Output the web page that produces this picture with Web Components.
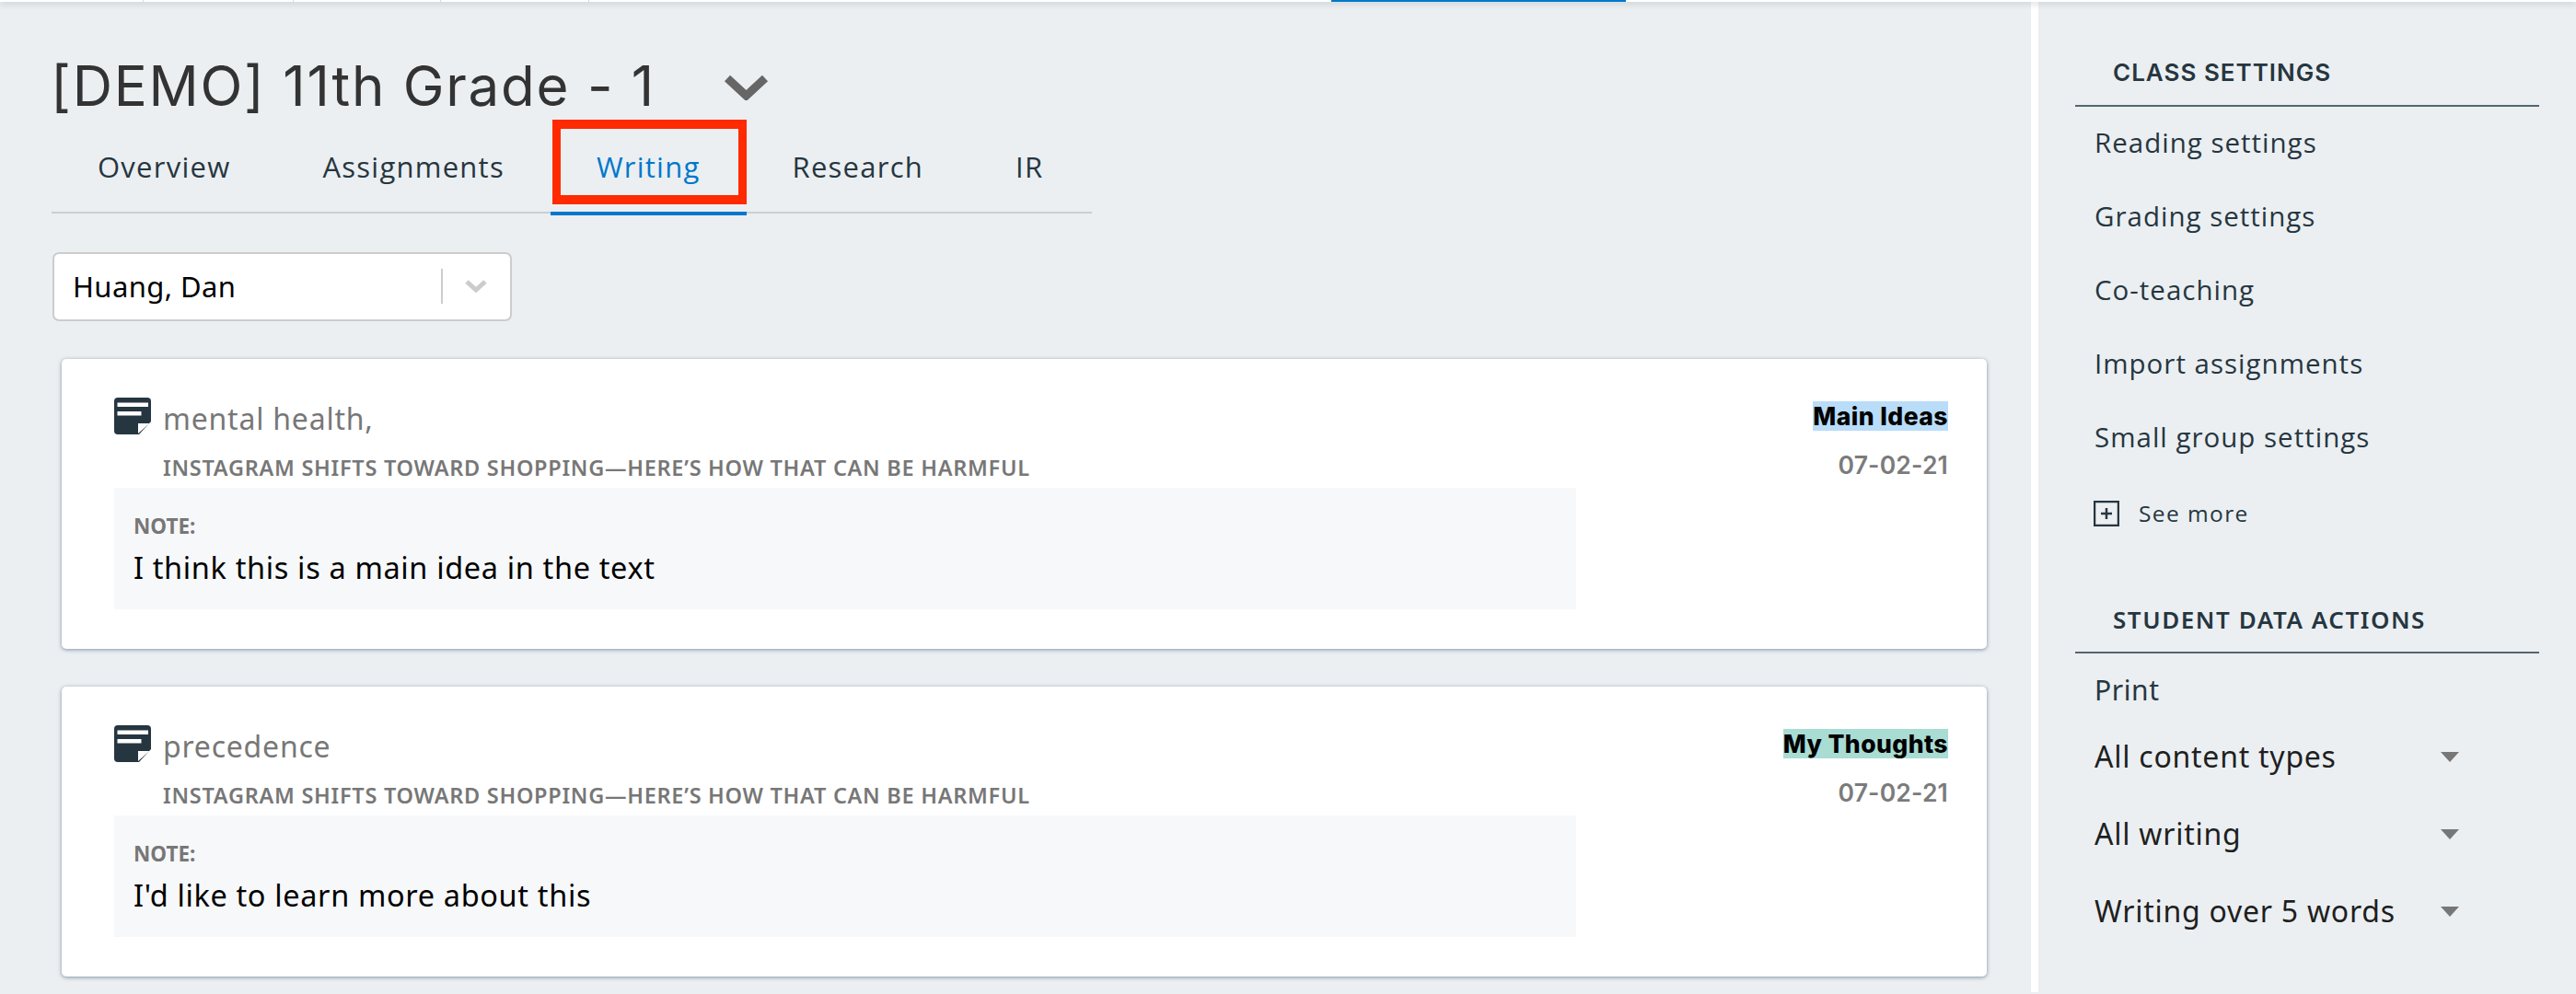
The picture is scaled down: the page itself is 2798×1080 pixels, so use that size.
<!DOCTYPE html>
<html lang="en">
<head>
<meta charset="utf-8">
<title>Writing</title>
<style>
  html, body { margin: 0; height: 100%; background: #ebeff2; overflow: hidden; }
  body { font-family: "Open Sans", sans-serif; }
  .page { display: flex; flex-direction: column; height: 1080px; }
  .columns { display: flex; flex: 1; min-height: 0; }
</style>
</head>
<body>
<div class="page">
  <top-strip></top-strip>
  <div class="columns">
    <main-column>
      <class-title>[DEMO] 11th Grade - 1</class-title>
      <tab-bar>
        <tab-item>Overview</tab-item>
        <tab-item>Assignments</tab-item>
        <tab-item active flagged>Writing</tab-item>
        <tab-item>Research</tab-item>
        <tab-item>IR</tab-item>
      </tab-bar>
      <student-select>Huang, Dan</student-select>
      <note-card word="mental health," tag="Main Ideas" tagcolor="#b9dcf8" date="07-02-21"
        source="INSTAGRAM SHIFTS TOWARD SHOPPING—HERE’S HOW THAT CAN BE HARMFUL">I think this is a main idea in the text</note-card>
      <note-card word="precedence" tag="My Thoughts" tagcolor="#a9dcd3" date="07-02-21"
        source="INSTAGRAM SHIFTS TOWARD SHOPPING—HERE’S HOW THAT CAN BE HARMFUL">I'd like to learn more about this</note-card>
    </main-column>
    <side-panel>
      <side-heading>CLASS SETTINGS</side-heading>
      <side-link>Reading settings</side-link>
      <side-link>Grading settings</side-link>
      <side-link>Co-teaching</side-link>
      <side-link>Import assignments</side-link>
      <side-link>Small group settings</side-link>
      <see-more>See more</see-more>
      <side-heading second>STUDENT DATA ACTIONS</side-heading>
      <side-print>Print</side-print>
      <side-filter>All content types</side-filter>
      <side-filter>All writing</side-filter>
      <side-filter>Writing over 5 words</side-filter>
    </side-panel>
  </div>
</div>

<script>
const define = (name, css, html, setup) => {
  customElements.define(name, class extends HTMLElement {
    constructor() {
      super();
      this.attachShadow({ mode: 'open' });
      this.shadowRoot.innerHTML = `<style>${css}</style>${html}`;
    }
    connectedCallback() {
      if (setup) setup(this, this.shadowRoot);
    }
  });
};

define('top-strip', `
  :host { display: block; position: relative; height: 2px; background: #fff; box-shadow: 0 1px 7px rgba(60,70,80,.45); z-index: 2; }
  .active { position: absolute; left: 1446px; width: 320px; top: 0; height: 2px; background: #0077cc; }
  .tick { position: absolute; top: 0; height: 2px; width: 1px; background: #d5d9dc; }
`, `
  <i class="tick" style="left:155px"></i><i class="tick" style="left:318px"></i>
  <i class="tick" style="left:478px"></i><i class="tick" style="left:639px"></i>
  <div class="active"></div>
`);

define('main-column', `
  :host { display: block; flex: 0 0 2206px; box-sizing: border-box; padding: 56px 0 0 0; overflow: hidden; }
`, `<slot></slot>`);

define('class-title', `
  :host { display: flex; align-items: center; height: 70px; padding-left: 55px;
    font: 400 60px/70px Inter, sans-serif; letter-spacing: 1.75px; color: #333; }
  svg { margin-left: 74px; margin-top: 4px; }
`, `<slot></slot><svg width="49" height="28" viewBox="0 0 49 28"><path d="M4 4 L24.5 23 L45 4" fill="none" stroke="#666" stroke-width="9"/></svg>`);

define('tab-bar', `
  :host { display: flex; box-sizing: border-box; width: 1130px; height: 104px; margin: 0 0 0 56px; border-bottom: 2px solid #c8d0d2; }
`, `<slot></slot>`);

define('tab-item', `
  :host { display: block; position: relative; box-sizing: border-box; height: 106px; padding: 33px 50px 0 50px;
    font: 400 31px/40px "Open Sans", sans-serif; letter-spacing: 1.25px; color: #263640; }
  :host([active]) { color: #0077cc; border-bottom: 4px solid #0077cc; }
  .flag { display: none; position: absolute; left: 2px; top: 2px; right: 0; height: 92px; box-sizing: border-box; border: solid #ff2a00; border-width: 10px 9px; }
  :host([flagged]) .flag { display: block; }
`, `<slot></slot><div class="flag"></div>`);

define('student-select', `
  :host { display: flex; align-items: center; box-sizing: border-box; width: 499px; height: 75px; margin: 42px 0 41px 57px;
    padding: 0 0 2px 20px; background: #fff; border: 2px solid #ccc; border-radius: 7px;
    font: 400 31px/40px "Noto Sans", sans-serif; letter-spacing: .4px; color: #000; }
  .text { flex: 1; }
  .sep { width: 2px; height: 38px; background: #ccc; margin-right: 24px; }
  svg { margin-right: 25px; }
`, `<div class="text"><slot></slot></div><div class="sep"></div><svg width="24" height="14" viewBox="0 0 24 14"><path d="M2 2 L12 11 L22 2" fill="none" stroke="#ccc" stroke-width="5"/></svg>`);

define('note-card', `
  :host { display: block; box-sizing: border-box; width: 2091px; height: 315px; margin: 0 0 41px 67px; padding: 42px 42px 0 57px;
    background: #fff; border-radius: 5px; box-shadow: 0 1px 4px rgba(70,95,115,.65); }
  .head { display: flex; justify-content: space-between; align-items: flex-start; }
  .word-row { display: flex; align-items: flex-start; }
  svg { flex: none; }
  .word { margin: 3px 0 0 13px; font: 400 32px/40px "Noto Sans", sans-serif; letter-spacing: .78px; color: #777; }
  .source { margin: 17px 0 0 53px; font: 600 23.5px/32px "Noto Sans", sans-serif; letter-spacing: .72px; color: #777; white-space: nowrap; }
  .tag { display: inline-block; height: 32px; font: 800 26.5px/33px Inter, sans-serif; letter-spacing: .45px; color: #000; }
  .meta { text-align: right; margin-top: 4px; }
  .date { margin-top: 20px; font: 600 26.5px/34px Inter, sans-serif; letter-spacing: .2px; color: #7b7b7b; }
  .note { box-sizing: border-box; width: 1588px; height: 132px; margin-top: 6px; padding: 27px 21px 0; background: #f7f8fa; }
  .label { font: 700 22.5px/30px "Noto Sans", sans-serif; color: #777; }
  .text { margin-top: 9px; font: 400 32.5px/42px "Noto Sans", sans-serif; letter-spacing: .64px; color: #000; }
`, `
  <div class="head">
    <div>
      <div class="word-row">
        <svg width="40" height="40" viewBox="0 0 40 40">
          <path d="M4 0 H36 a4 4 0 0 1 4 4 V26 L27 40 H4 a4 4 0 0 1 -4 -4 V4 a4 4 0 0 1 4 -4 Z" fill="#263640"/>
          <path d="M3.5 5.5 H37 V10 H3.5 Z M3.5 15 H29.5 V19.5 H3.5 Z" fill="#fff"/>
          <path d="M26 39 V28 H38.5 Z" fill="#fff"/>
        </svg>
        <span class="word"></span>
      </div>
      <div class="source"></div>
    </div>
    <div class="meta">
      <div><span class="tag"></span></div>
      <div class="date"></div>
    </div>
  </div>
  <div class="note">
    <div class="label">NOTE:</div>
    <div class="text"><slot></slot></div>
  </div>
`, (host, root) => {
  root.querySelector('.word').textContent = host.getAttribute('word');
  root.querySelector('.source').textContent = host.getAttribute('source');
  const tag = root.querySelector('.tag');
  tag.textContent = host.getAttribute('tag');
  tag.style.background = host.getAttribute('tagcolor');
  root.querySelector('.date').textContent = host.getAttribute('date');
});

define('side-panel', `
  :host { display: block; flex: 1; box-sizing: border-box; border-left: 8px solid #fff; padding: 0 40px 0 40px; height: 100%; margin-top: -2px; }
`, `<slot></slot>`);

define('side-heading', `
  :host { display: block; box-sizing: border-box; height: 116px; padding: 59px 0 0 41px; border-bottom: 2px solid #546670;
    font: 600 26px/40px Inter, sans-serif; letter-spacing: 1px; color: #263640; }
  :host([second]) { height: 130px; padding-top: 73px; font-family: "Noto Sans", sans-serif; letter-spacing: 1.55px; }
`, `<slot></slot>`);

define('side-link', `
  :host { display: block; height: 80px; padding-left: 21px; font: 400 29.5px/78px "Open Sans", sans-serif; letter-spacing: 1px; color: #263640; }
`, `<slot></slot>`);

define('see-more', `
  :host { display: flex; align-items: center; height: 44px; padding-left: 20px; margin-top: 20px;
    font: 400 24.5px/44px "Open Sans", sans-serif; letter-spacing: 1.4px; color: #263640; }
  svg { margin-right: 21px; }
`, `<svg width="28" height="28" viewBox="0 0 28 28"><rect x="1" y="1" width="26" height="26" fill="none" stroke="#263640" stroke-width="2.5"/><path d="M14 8 V20 M8 14 H20" stroke="#263640" stroke-width="2.5"/></svg><slot></slot>`);

define('side-print', `
  :host { display: block; height: 60px; padding-left: 21px; margin-top: 10px; font: 400 30px/60px "Noto Sans", sans-serif; letter-spacing: .6px; color: #263640; }
`, `<slot></slot>`);

define('side-filter', `
  :host { display: flex; align-items: center; justify-content: space-between; box-sizing: border-box; width: 417px; height: 84px; padding-left: 21px;
    font: 400 32px/84px "Noto Sans", sans-serif; letter-spacing: .75px; color: #1f1f1f; }
  i { width: 0; height: 0; border: solid transparent; border-width: 11px 10px 0; border-top-color: #777; }
`, `<slot></slot><i></i>`);
</script>
</body>
</html>
